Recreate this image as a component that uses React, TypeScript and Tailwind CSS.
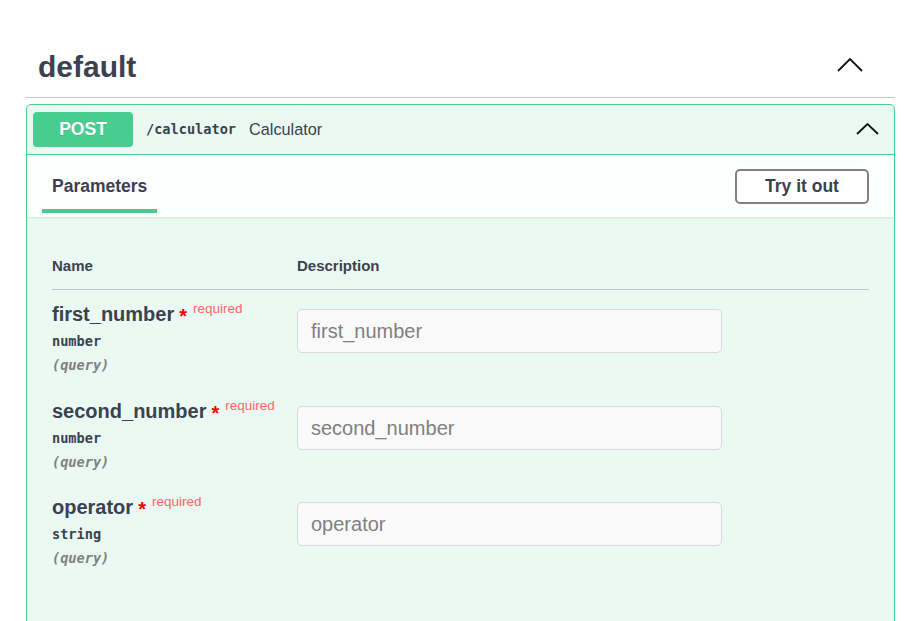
import React from "react";

function Chevron({ w, h, sw }: { w: number; h: number; sw: number }) {
  return (
    <svg width={w} height={h} viewBox={`0 0 ${w} ${h}`} fill="none">
      <polyline
        points={`1,${h - 1} ${w / 2},1 ${w - 1},${h - 1}`}
        stroke="#111"
        strokeWidth={sw}
        strokeLinecap="butt"
        strokeLinejoin="miter"
      />
    </svg>
  );
}

const params = [
  { name: "first_number", type: "number" },
  { name: "second_number", type: "number" },
  { name: "operator", type: "string" },
];

export default function App() {
  return (
    <div className="w-[911px] h-[621px] overflow-hidden bg-white font-['Liberation_Sans',Arial,sans-serif] text-[#3b4151]">
      <div className="ml-[26px] w-[869px] pt-[39px]">
        {/* Tag header */}
        <div className="flex items-center justify-between h-[59px] border-b border-[#c4c6cb] pl-[12px] pr-[32px]">
          <h3 className="text-[30px] font-bold leading-[36px] mb-[2px]">default</h3>
          <div className="mb-[6px]">
            <Chevron w={26} h={14} sw={1.8} />
          </div>
        </div>

        {/* Operation block */}
        <div className="mt-[6px] w-[869px] border border-[#49cc90] rounded-[5px] bg-[#ebf9f3] h-[540px]">
          {/* Summary */}
          <div className="flex items-center h-[50px] pl-[6px] pr-[15px] border-b border-[#49cc90]">
            <div className="w-[100px] h-[35px] rounded-[4px] bg-[#49cc90] flex items-center justify-center text-white font-bold text-[17.5px] [text-shadow:0_1px_0_rgba(0,0,0,0.1)]">
              POST
            </div>
            <span className="ml-[13px] font-['DejaVu_Sans_Mono',monospace] font-bold text-[13.6px] text-[#3b4151]">
              /calculator
            </span>
            <span className="ml-[13px] text-[16.25px] text-[#3b4151]">Calculator</span>
            <div className="ml-auto mt-[-2px]">
              <Chevron w={23} h={12} sw={1.8} />
            </div>
          </div>

          {/* Tab header */}
          <div className="flex items-stretch justify-between h-[62px] bg-[#fdfefe] shadow-[0_1px_2px_rgba(0,0,0,0.1)] pl-[15px] pr-[25px]">
            <div className="flex flex-col justify-end pb-[4px]">
              <div className="px-[10px] text-[17.5px] font-bold leading-[24px] mb-[11px]">Parameters</div>
              <div className="h-[4px] bg-[#49cc90]" />
            </div>
            <div className="flex items-center">
              <button className="w-[134px] h-[35px] border-2 border-[#808080] rounded-[5px] bg-white text-[17.5px] font-bold text-[#3b4151] flex items-center justify-center">
                Try it out
              </button>
            </div>
          </div>

          {/* Parameters table */}
          <div className="px-[25px] pt-[39px]">
            <div className="flex border-b border-[#c4c6cb] pb-[13px] text-[15px] font-bold leading-[20px]">
              <div className="w-[245px]">Name</div>
              <div>Description</div>
            </div>
            {params.map((p, i) => (
              <div key={p.name} className={i === 2 ? "flex pt-[11px] pb-[12px]" : "flex pt-[12px] pb-[12px]"}>
                <div className="w-[245px] flex flex-col">
                  <div className="h-[24px] leading-[24px] flex items-center whitespace-nowrap">
                    <span className="text-[20px] font-bold">{p.name}</span>
                    <span className="ml-[5px] text-[20px] font-bold text-[#ff0000] relative top-[2px]">*</span>
                    <span className="ml-[6px] text-[13.5px] text-[#ff6666] relative top-[-5px]">required</span>
                  </div>
                  <div className="mt-[5px] h-[20px] leading-[20px] font-['DejaVu_Sans_Mono',monospace] font-bold text-[13.6px] text-[#3b4151]">
                    {p.type}
                  </div>
                  <div className="mt-[4px] h-[20px] leading-[20px] font-['DejaVu_Sans_Mono',monospace] italic font-bold text-[13.6px] text-[#808080]">
                    (query)
                  </div>
                </div>
                <div className="pt-[7px]">
                  <input
                    placeholder={p.name}
                    className="w-[425px] h-[44px] bg-[#fafafa] border border-[#d9d9d9] rounded-[5px] px-[13px] text-[20px] text-[#3b4151] placeholder:text-[#808080] outline-none"
                  />
                </div>
              </div>
            ))}
          </div>
        </div>
      </div>
    </div>
  );
}
